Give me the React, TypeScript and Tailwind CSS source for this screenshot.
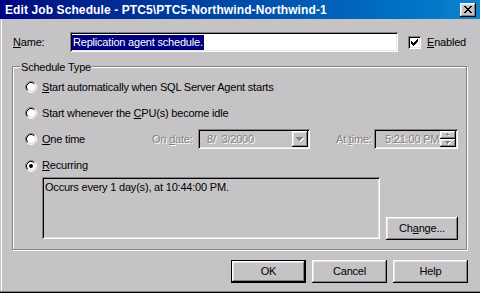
import type { ReactNode } from "react";

const raised =
  "bg-[#c6c3c6] shadow-[inset_-1px_-1px_0_#000,inset_1px_1px_0_#fff,inset_-2px_-2px_0_#848284,inset_2px_2px_0_#e7e3e7]";
const sunken =
  "shadow-[inset_1px_1px_0_#848284,inset_-1px_-1px_0_#fff,inset_2px_2px_0_#000,inset_-2px_-2px_0_#e7e3e7]";
const disabledText = "text-[#848284] [text-shadow:1px_1px_0_#fff]";

function Radio({ checked }: { checked?: boolean }) {
  return (
    <svg width="12" height="12" viewBox="0 0 12 12" className="shrink-0">
      <circle cx="6" cy="6" r="4" fill="#fff" />
      <path d="M2.11 9.89A5.5 5.5 0 0 1 9.89 2.11" fill="none" stroke="#848284" />
      <path d="M9.89 2.11A5.5 5.5 0 0 1 2.11 9.89" fill="none" stroke="#fff" />
      <path d="M2.82 9.18A4.5 4.5 0 0 1 9.18 2.82" fill="none" stroke="#000" />
      <path d="M9.18 2.82A4.5 4.5 0 0 1 2.82 9.18" fill="none" stroke="#e7e3e7" />
      {checked && <circle cx="6" cy="6" r="2" fill="#000" />}
    </svg>
  );
}

function CheckMark() {
  // classic 7x7 check glyph, three pixels per column
  const cols = [2, 3, 4, 3, 2, 1, 0];
  return (
    <svg width="7" height="7" viewBox="0 0 7 7" shapeRendering="crispEdges">
      {cols.map((y, x) => (
        <rect key={x} x={x} y={y} width="1" height="3" fill="#000" />
      ))}
    </svg>
  );
}

function CloseGlyph() {
  const rows: [number, number][][] = [
    [[0, 2], [6, 2]],
    [[1, 2], [5, 2]],
    [[2, 2], [4, 2]],
    [[3, 2]],
    [[2, 2], [4, 2]],
    [[1, 2], [5, 2]],
    [[0, 2], [6, 2]],
  ];
  return (
    <svg width="8" height="7" viewBox="0 0 8 7" shapeRendering="crispEdges">
      {rows.map((r, y) =>
        r.map(([x, w]) => <rect key={`${y}-${x}`} x={x} y={y} width={w} height="1" fill="#000" />)
      )}
    </svg>
  );
}

function DownArrow({ size = 7 }: { size?: number }) {
  const h = Math.ceil(size / 2);
  return (
    <svg width={size + 1} height={h + 1} viewBox={`0 0 ${size + 1} ${h + 1}`} shapeRendering="crispEdges">
      {Array.from({ length: h }).map((_, i) => (
        <rect key={`s${i}`} x={i + 1} y={i + 1} width={size - i * 2} height="1" fill="#fff" />
      ))}
      {Array.from({ length: h }).map((_, i) => (
        <rect key={i} x={i} y={i} width={size - i * 2} height="1" fill="#848284" />
      ))}
    </svg>
  );
}

function UpArrow() {
  return (
    <svg width="6" height="4" viewBox="0 0 6 4" shapeRendering="crispEdges">
      <rect x="3" y="2" width="1" height="1" fill="#fff" />
      <rect x="2" y="0" width="1" height="1" fill="#848284" />
      <rect x="1" y="1" width="3" height="1" fill="#848284" />
    </svg>
  );
}

function Button({ children, isDefault, className = "" }: { children: ReactNode; isDefault?: boolean; className?: string }) {
  if (isDefault) {
    return (
      <div className={`border border-black ${className}`}>
        <div className={`${raised} w-full h-full flex items-center justify-center`}>{children}</div>
      </div>
    );
  }
  return <div className={`${raised} flex items-center justify-center ${className}`}>{children}</div>;
}

export default function App() {
  return (
    <div className="w-[480px] h-[293px] bg-[#c6c3c6] flex flex-col overflow-hidden font-['Liberation_Sans',Arial,sans-serif] text-[11px] tracking-[-0.2px] leading-none text-black select-none shadow-[inset_0_-1px_0_#000,inset_0_-2px_0_#848284,inset_1px_0_0_#c6c3c6,inset_2px_0_0_#fff]">
      {/* title bar */}
      <div className="h-[19px] shrink-0 flex items-center justify-between pl-[5px] pr-[4px] bg-linear-to-r from-[#000080] to-[#1084d0]">
        <span className="text-white font-bold text-[12px] tracking-[0.1px]">
          Edit Job Schedule - PTC5\PTC5-Northwind-Northwind-1
        </span>
        <div className={`${raised} w-[16px] h-[14px] flex items-center justify-center pb-px`}>
          <CloseGlyph />
        </div>
      </div>

      <div className="flex-1 flex flex-col pl-[12px] pr-[12px]">
        {/* name row */}
        <div className="mt-[13px] h-[20px] flex items-center">
          <span className="ml-px w-[57px]">
            <u>N</u>ame:
          </span>
          <div className={`${sunken} bg-white w-[328px] h-[20px] flex items-center pl-[2px]`}>
            <span className="bg-[#000080] text-white px-px py-[2px]">Replication agent schedule.</span>
          </div>
          <div className={`${sunken} bg-white w-[13px] h-[13px] ml-[10px] flex items-center justify-center`}>
            <CheckMark />
          </div>
          <span className="ml-[6px]">
            <u>E</u>nabled
          </span>
        </div>

        {/* schedule type group */}
        <div className="relative mt-[14px] mr-px border border-[#848284] shadow-[inset_1px_1px_0_#fff,1px_1px_0_#fff] pl-[12px] pr-[8px] pt-[7px] pb-[9px]">
          <span className="absolute -top-[6px] left-[7px] px-px bg-[#c6c3c6] leading-[12px]">Schedule Type</span>

          <div className="h-[26px] flex items-center">
            <Radio />
            <span className="ml-[5px]">
              <u>S</u>tart automatically when SQL Server Agent starts
            </span>
          </div>
          <div className="h-[26px] flex items-center">
            <Radio />
            <span className="ml-[5px]">
              Start whenever the <u>C</u>PU(s) become idle
            </span>
          </div>
          <div className="h-[26px] flex items-center">
            <Radio />
            <span className="ml-[5px] w-[110px]">
              <u>O</u>ne time
            </span>
            <span className={`w-[46px] ${disabledText}`}>
              On <u>d</u>ate:
            </span>
            <div className={`${sunken} w-[112px] h-[20px] flex items-center justify-between pl-[9px] pr-[2px]`}>
              <span className={disabledText}>8/&nbsp; 3/2000</span>
              <div className={`${raised} w-[16px] h-[16px] flex items-center justify-center`}>
                <DownArrow />
              </div>
            </div>
            <span className={`ml-[26px] w-[38px] ${disabledText}`}>
              At <u>t</u>ime:
            </span>
            <div className={`${sunken} w-[84px] h-[20px] flex items-center justify-between pl-[11px] pr-[2px]`}>
              <span className={disabledText}>5:21:00 PM</span>
              <div className="w-[16px] h-[16px] flex flex-col">
                <div className={`${raised} h-[8px] flex items-center justify-center`}>
                  <UpArrow />
                </div>
                <div className={`${raised} h-[8px] flex items-center justify-center`}>
                  <DownArrow size={5} />
                </div>
              </div>
            </div>
          </div>
          <div className="h-[23px] mt-[2px] flex items-center">
            <Radio checked />
            <span className="ml-[5px]">
              <u>R</u>ecurring
            </span>
          </div>

          <div className="ml-[17px] flex items-end gap-[6px]">
            <div className={`${sunken} w-[338px] h-[62px] mb-px pl-[3px] pt-[5px]`}>
              Occurs every 1 day(s), at 10:44:00 PM.
            </div>
            <Button className="w-[72px] h-[23px]">
              Ch<u>a</u>nge...
            </Button>
          </div>
        </div>

        {/* dialog buttons */}
        <div className="mt-[10px] flex justify-end gap-[6px]">
          <Button isDefault className="w-[75px] h-[23px]">
            OK
          </Button>
          <Button className="w-[75px] h-[23px]">Cancel</Button>
          <Button className="w-[75px] h-[23px]">Help</Button>
        </div>
      </div>
    </div>
  );
}
